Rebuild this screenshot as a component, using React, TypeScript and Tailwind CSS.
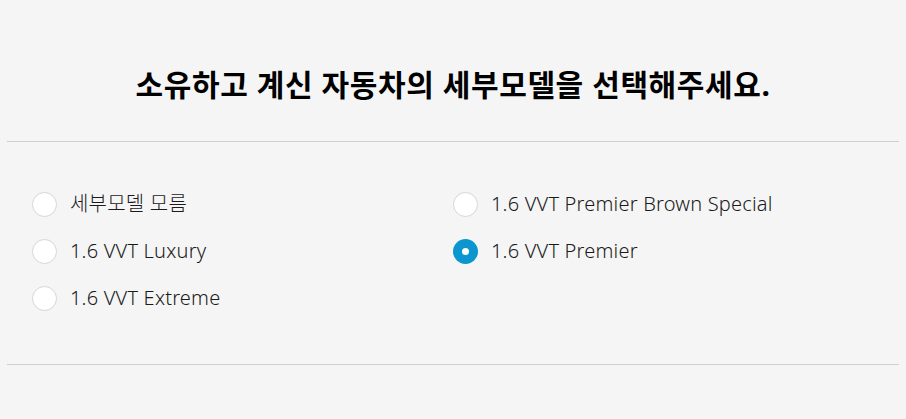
import { useState } from 'react';

const models = [
  { id: 'unknown', label: '세부모델 모름' },
  { id: 'brown', label: '1.6 VVT Premier Brown Special' },
  { id: 'luxury', label: '1.6 VVT Luxury' },
  { id: 'premier', label: '1.6 VVT Premier' },
  { id: 'extreme', label: '1.6 VVT Extreme' },
];

export default function App() {
  const [selected, setSelected] = useState('premier');

  return (
    <div
      className="min-h-[419px] w-full bg-[#f5f5f5] text-[#111]"
      style={{ fontFamily: '"Noto Sans", "Noto Sans CJK KR", sans-serif' }}
    >
      <div className="px-[7px]">
        <h2 className="pt-[64px] pb-[35px] text-center text-[30px] font-bold leading-[42px] tracking-[0.6px] text-black">
          소유하고 계신 자동차의 세부모델을 선택해주세요.
        </h2>
        <div className="border-t border-[#cfcfcf]" />

        {/* 모델 목록 */}
        <div className="grid grid-cols-2 gap-y-[13px] px-[25px] pt-[45px] pb-[49px]">
          {models.map((m) => {
            const on = selected === m.id;
            return (
              <label
                key={m.id}
                className="flex h-[34px] cursor-pointer items-center gap-[13px]"
                onClick={() => setSelected(m.id)}
              >
                <span
                  className={`flex h-[25px] w-[25px] shrink-0 items-center justify-center rounded-full ${
                    on ? 'bg-[#0b96cf]' : 'border border-[#d6d6d6] bg-white'
                  }`}
                >
                  {on && <span className="h-[7px] w-[7px] rounded-full bg-white" />}
                </span>
                <span className="text-[20px] font-light leading-none tracking-[0.2px] text-[#1a1a1a]">
                  {m.label}
                </span>
              </label>
            );
          })}
        </div>
        <div className="border-t border-[#cfcfcf]" />
      </div>
    </div>
  );
}
